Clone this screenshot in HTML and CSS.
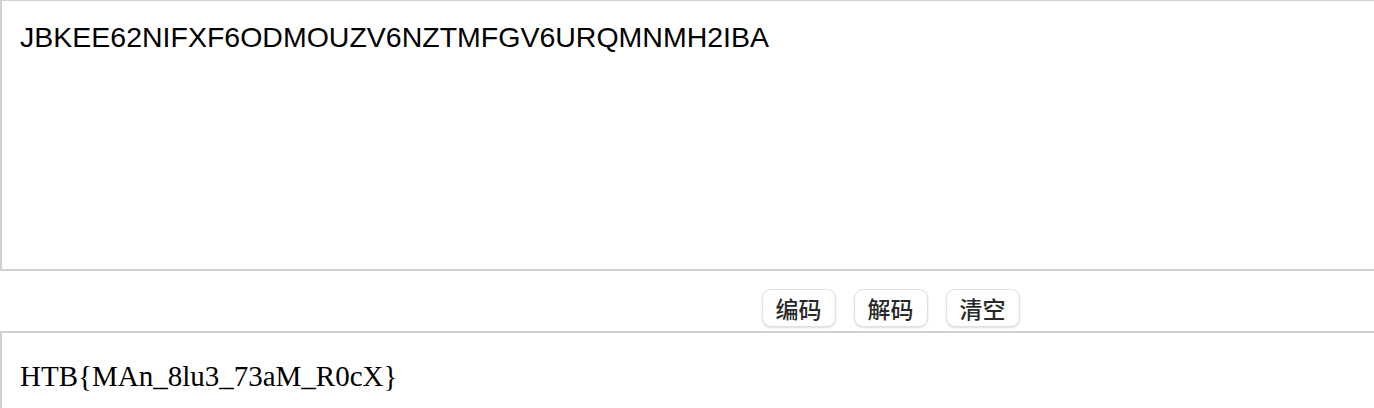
FILE: index.html
```html
<!DOCTYPE html>
<html>
<head>
    <meta charset="utf-8">
    <title>Base32 编码解码</title>
    <link rel="stylesheet" href="styles.css">
</head>
<body>
    <div class="page">
        <div class="tool">
            <textarea id="input" class="input-box" spellcheck="false">JBKEE62NIFXF6ODMOUZV6NZTMFGV6URQMNMH2IBA</textarea>
            <div class="actions">
                <button type="button" class="btn">编码</button>
                <button type="button" class="btn">解码</button>
                <button type="button" class="btn">清空</button>
            </div>
            <div id="output" class="output-box">HTB{MAn_8lu3_73aM_R0cX}</div>
        </div>
    </div>
</body>
</html>
```

FILE: styles.css
```css
html, body {
    margin: 0;
    padding: 0;
    background: #fff;
    overflow: hidden;
}
.page {
    width: 100%;
    height: 408px;
    overflow: hidden;
}
.tool {
    width: 1781px;
}
.input-box {
    display: block;
    width: 100%;
    height: 271px;
    margin: 0;
    padding: 20px 18px;
    border: 2px solid #d1d1d1;
    border-top-width: 1px;
    border-radius: 0;
    box-sizing: border-box;
    font-family: "Liberation Sans", Arial, sans-serif;
    font-size: 28.5px;
    line-height: 33px;
    color: #000;
    resize: none;
    overflow: hidden;
    outline: none;
}
.actions {
    display: flex;
    justify-content: center;
    gap: 18px;
    padding: 18px 0 4px;
}
.btn {
    height: 38px;
    padding: 0 13px;
    background: #fff;
    border: 1px solid #e0e0e0;
    border-radius: 9px;
    box-shadow: 0 1px 2px rgba(0,0,0,0.14);
    font-family: "Noto Sans CJK SC", sans-serif;
    font-size: 23px;
    font-weight: 500;
    line-height: 36px;
    color: #2a2a2a;
    cursor: pointer;
}
.output-box {
    height: 77px;
    box-sizing: border-box;
    padding: 27px 18px 0;
    border-top: 2px solid #d1d1d1;
    border-left: 2px solid #d1d1d1;
    font-family: "Liberation Serif", "Times New Roman", serif;
    font-size: 29px;
    line-height: 33px;
    color: #000;
}
```
